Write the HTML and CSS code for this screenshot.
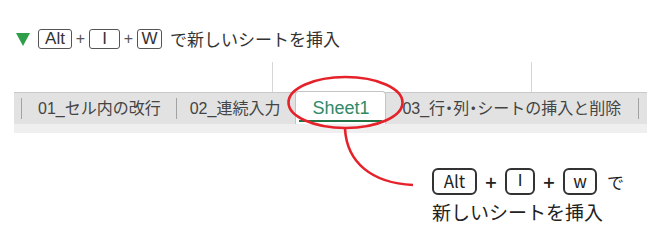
FILE: index.html
```html
<!DOCTYPE html>
<html lang="ja">

<head>
    <meta charset="UTF-8">
    <meta name="viewport" content="width=device-width, initial-scale=1.0">
    <title>新しいシートを挿入</title>
    <link rel="stylesheet" href="styles.css">
</head>

<body>
    <div class="page">
        <div class="lead">
            <span class="mark"></span>
            <span class="key key-alt">Alt</span>
            <span class="plus">+</span>
            <span class="key key-i">I</span>
            <span class="plus">+</span>
            <span class="key key-w">W</span>
            <span class="lead-text">で新しいシートを挿入</span>
        </div>

        <!-- excelのシート見出し -->
        <div class="cells">
            <div class="cell"></div>
            <div class="cell"></div>
        </div>
        <div class="tabbar">
            <span class="sep"></span>
            <span class="tab">01_セル内の改行</span>
            <span class="sep"></span>
            <span class="tab tab-2">02_連続入力</span>
            <span class="tab active">Sheet1</span>
            <span class="tab tab-4">03_行<span class="dot">・</span>列<span class="dot">・</span>シートの挿入と削除</span>
            <span class="sep"></span>
        </div>
        <div class="strip"></div>

        <!-- 吹き出し -->
        <div class="callout">
            <div class="callout-keys">
                <span class="ckey ckey-alt">Alt</span>
                <span class="cplus">+</span>
                <span class="ckey ckey-i">I</span>
                <span class="cplus">+</span>
                <span class="ckey ckey-w">w</span>
                <span class="cde">で</span>
            </div>
            <div class="callout-text">新しいシートを挿入</div>
        </div>

        <svg class="marks" width="670" height="245" viewBox="0 0 670 245">
            <ellipse cx="345.5" cy="102.5" rx="57" ry="25.5" fill="none" stroke="#e5222a" stroke-width="2.6" />
            <path d="M345 129 C347 162, 371 183, 413 185" fill="none" stroke="#e5222a" stroke-width="2.6" />
        </svg>
    </div>
</body>

</html>
```

FILE: styles.css
```css
* {
    box-sizing: border-box;
}

body {
    margin: 0;
    background-color: #fff;
    font-family: "Liberation Sans", "Noto Sans CJK JP", sans-serif;
    color: #333;
}

.page {
    position: relative;
    width: 670px;
    height: 245px;
    overflow: hidden;
}

/* 上の見出し */
.lead {
    display: flex;
    align-items: center;
    height: 20px;
    margin-top: 29px;
    padding-left: 16px;
}

.mark {
    width: 0;
    height: 0;
    border-left: 7px solid transparent;
    border-right: 7px solid transparent;
    border-top: 13px solid #2f9e48;
    margin-right: 8px;
}

.key {
    height: 20px;
    border: 1px solid #555;
    border-radius: 3px;
    font-size: 17px;
    line-height: 18px;
    text-align: center;
    color: #333;
}

.key-alt {
    width: 34px;
}

.key-i {
    width: 31px;
}

.key-w {
    width: 25px;
}

.plus {
    width: 17px;
    text-align: center;
    font-size: 16px;
    color: #555;
}

.lead-text {
    margin-left: 8px;
    font-family: "Noto Sans CJK JP", sans-serif;
    font-size: 17px;
    line-height: 20px;
}

/* シート */
.cells {
    display: flex;
    height: 30px;
    margin-top: 13px;
    margin-left: 14px;
}

.cell {
    width: 259px;
    border-right: 1px solid #d6d6d6;
}

.tabbar {
    display: flex;
    align-items: center;
    width: 633px;
    height: 32px;
    margin-left: 14px;
    padding-left: 7px;
    background-color: #e2e2e2;
    border-top: 1px solid #c9c9c9;
}

.sep {
    width: 1px;
    height: 21px;
    background-color: #a3a3a3;
}

.tab {
    padding: 0 15px 0 16px;
    font-family: "Liberation Sans", "Noto Sans CJK JP", sans-serif;
    font-size: 16px;
    line-height: 31px;
    color: #444;
    white-space: nowrap;
}

.tab-2 {
    padding: 0 15px 0 13px;
}

.tab-4 {
    padding: 0 17px 0 16px;
}

.dot {
    font-feature-settings: "halt";
}

.active {
    position: relative;
    align-self: stretch;
    margin-top: -2px;
    width: 91px;
    padding: 0;
    text-align: center;
    background-color: #fff;
    border: 1px solid #c4c4c4;
    border-bottom: none;
    border-radius: 4px 4px 0 0;
    font-size: 18px;
    line-height: 33px;
    color: #2f8a68;
}

.active::after {
    content: "";
    position: absolute;
    left: 3px;
    right: 3px;
    bottom: 2px;
    height: 2px;
    background-color: #217346;
}

.strip {
    width: 633px;
    height: 9px;
    margin-left: 14px;
    background-color: #efefef;
}

/* 吹き出し */
.callout {
    margin-top: 35px;
    margin-left: 432px;
    font-family: "Noto Sans CJK JP", sans-serif;
    color: #222;
}

.callout-keys {
    display: flex;
    align-items: center;
    height: 27px;
}

.ckey {
    height: 27px;
    border: 2px solid #333;
    border-radius: 6px;
    font-size: 17px;
    line-height: 22px;
    text-align: center;
}

.ckey-alt {
    width: 45px;
}

.ckey-i {
    width: 30px;
    font-family: "Liberation Sans", sans-serif;
    font-weight: 300;
}

.ckey-w {
    width: 34px;
}

.cplus {
    width: 28px;
    text-align: center;
    font-size: 20px;
    font-weight: 500;
}

.cde {
    margin-left: 10px;
    font-size: 17px;
}

.callout-text {
    margin-top: 3px;
    font-size: 19px;
    line-height: 28px;
}

.marks {
    position: absolute;
    top: 0;
    left: 0;
    pointer-events: none;
}
```
